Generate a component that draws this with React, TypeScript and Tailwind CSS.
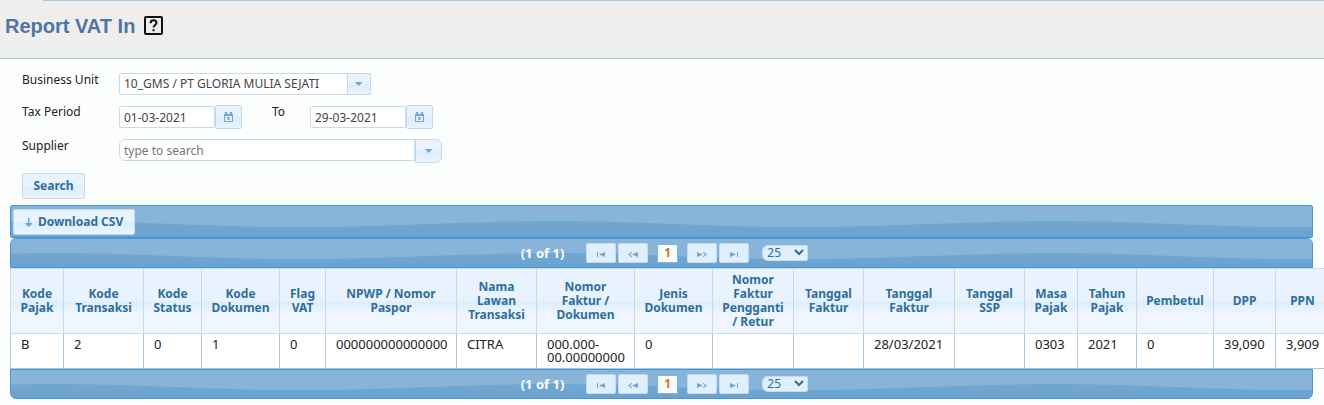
import { useId, useState, type ReactNode } from "react";
import { clsx } from "clsx";

type Column = {
  label: string;
  width: string;
  value: string;
};

const columns: Column[] = [
  { label: "Kode Pajak", width: "w-[53px]", value: "B" },
  { label: "Kode Transaksi", width: "w-[80px]", value: "2" },
  { label: "Kode Status", width: "w-[58px]", value: "0" },
  { label: "Kode Dokumen", width: "w-[78px]", value: "1" },
  { label: "Flag VAT", width: "w-[46px]", value: "0" },
  { label: "NPWP / Nomor Paspor", width: "w-[131px]", value: "000000000000000" },
  { label: "Nama Lawan Transaksi", width: "w-[80px]", value: "CITRA" },
  { label: "Nomor Faktur / Dokumen", width: "w-[98px]", value: "000.000-00.00000000" },
  { label: "Jenis Dokumen", width: "w-[78px]", value: "0" },
  { label: "Nomor Faktur Pengganti / Retur", width: "w-[81px]", value: "" },
  { label: "Tanggal Faktur", width: "w-[70px]", value: "" },
  { label: "Tanggal Faktur", width: "w-[91px]", value: "28/03/2021" },
  { label: "Tanggal SSP", width: "w-[70px]", value: "" },
  { label: "Masa Pajak", width: "w-[53px]", value: "0303" },
  { label: "Tahun Pajak", width: "w-[59px]", value: "2021" },
  { label: "Pembetul", width: "w-[77px]", value: "0" },
  { label: "DPP", width: "w-[62px]", value: "39,090" },
  { label: "PPN", width: "w-[54px]", value: "3,909" },
];

const glass = "border border-[#c5dbec] bg-linear-to-b from-[#e9f3fd] from-50% via-[#dcedfb] via-50% to-[#eaf4fd]";
const field = "border border-[#c5dbec] bg-white px-1 text-xs text-[#444] outline-none";

// glossy wave that repeats every 500px along a bar
function Wave({ crest }: { crest: number }) {
  const id = useId();
  const trough = crest + 6;
  return (
    <svg className="absolute inset-0 h-full w-full" aria-hidden="true">
      <defs>
        <pattern id={id} width="500" height="32" patternUnits="userSpaceOnUse">
          <path
            d={`M-215 0H545V${crest}C450 ${crest} 380 ${trough} 285 ${trough}C190 ${trough} 140 ${crest} 45 ${crest}C-50 ${crest} -120 ${trough} -215 ${trough}Z`}
            fill="#88b4d9"
          />
        </pattern>
      </defs>
      <rect width="100%" height="32" fill={`url(#${id})`} />
    </svg>
  );
}

function Bar({ className, crest, children }: { className: string; crest: number; children: ReactNode }) {
  return (
    <div
      className={clsx(
        "relative mr-[11px] overflow-hidden border border-[#4297d7] bg-linear-to-b from-[#74acd7] to-[#6ca2ce]",
        className
      )}
    >
      <Wave crest={crest} />
      {children}
    </div>
  );
}

function Caret() {
  return (
    <svg viewBox="0 0 8 4" className="h-1 w-2" aria-hidden="true">
      <path d="M0 0H7.5L3.75 4Z" fill="#6da8d5" />
    </svg>
  );
}

function CalendarIcon() {
  return (
    <svg viewBox="0 0 9 10" className="h-[10px] w-[9px]" aria-hidden="true">
      <path
        d="M0 2H1V0H3V2H6V0H8V2H9V10H0ZM1 4V9H8V4Z"
        fill="#6da8d5"
        fillRule="evenodd"
      />
      <path d="M3 5H5.5V8H3.5V6H3Z" fill="#6da8d5" />
    </svg>
  );
}

function DateField({ id, label, value }: { id: string; label: string; value: string }) {
  return (
    <div className="flex items-center">
      <input id={id} aria-label={label} defaultValue={value} className={clsx(field, "h-[22px] w-24 rounded-xs")} />
      <button
        type="button"
        aria-label={`Pick ${label}`}
        className={clsx(glass, "flex h-6 w-[27px] items-center justify-center rounded-xs")}
      >
        <CalendarIcon />
      </button>
    </div>
  );
}

const pagerIcons = {
  First: "M1 1H2V6H1ZM9 1V6L3 3.5Z",
  Previous: "M10 1V6L4 3.5ZM4 0.6L0 3.5L4 6.4V5.2L1.8 3.5L4 1.8Z",
  Next: "M0 1V6L6 3.5ZM6 0.6L10 3.5L6 6.4V5.2L8.2 3.5L6 1.8Z",
  Last: "M1 1V6L7 3.5ZM8 1H9V6H8Z",
};

function PagerButton({ name }: { name: keyof typeof pagerIcons }) {
  return (
    <button
      type="button"
      aria-label={`${name} page`}
      className="flex h-5 w-[30px] items-center justify-center rounded-xs border border-[#c5dbec] bg-[#dfeffc] pt-0.5"
    >
      <svg viewBox="0 0 10 7" className="h-[7px] w-[10px]" aria-hidden="true">
        <path d={pagerIcons[name]} fill="#6da8d5" />
      </svg>
    </button>
  );
}

function Paginator({ className }: { className: string }) {
  const [size, setSize] = useState("25");
  return (
    <Bar className={className} crest={14}>
      <div className="relative flex h-7 items-center justify-center pl-1.5">
        <span className="mr-[22px] text-[13px] font-bold text-white">(1 of 1)</span>
        <div className="flex gap-0.5">
          <PagerButton name="First" />
          <PagerButton name="Previous" />
        </div>
        <button
          type="button"
          aria-label="Page 1"
          aria-current="page"
          className="mx-[9px] h-[19px] w-[21px] border border-[#79b7e7] bg-[#f8fbfd] text-xs leading-4 font-bold text-[#e17009]"
        >
          1
        </button>
        <div className="flex gap-0.5">
          <PagerButton name="Next" />
          <PagerButton name="Last" />
        </div>
        <div className="relative ml-[13px]">
          <select
            aria-label="Rows per page"
            value={size}
            onChange={(e) => setSize(e.target.value)}
            className="block h-4 w-[46px] appearance-none rounded-l-md rounded-r-xs border border-[#c5dbec] bg-[#dfeffc] px-1 text-xs leading-3 text-[#2e6e9e]"
          >
            <option>25</option>
            <option>50</option>
            <option>100</option>
          </select>
          <svg viewBox="0 0 10 7" className="pointer-events-none absolute top-1 right-1 h-[7px] w-[10px]" aria-hidden="true">
            <path d="M1 1L5 5L9 1" fill="none" stroke="#2e6e9e" strokeWidth="2" />
          </svg>
        </div>
      </div>
    </Bar>
  );
}

export default function App() {
  return (
    <div className="min-h-screen overflow-hidden bg-[#fcfdfd] font-['Noto_Sans',sans-serif] text-xs leading-[14px] text-[#222]">
      <header className="border-b border-[#a6c9e2] bg-[#eee]">
        <div className="ml-[43px] h-px bg-[#a6c9e2]" />
        <div className="flex h-[57px] items-center gap-[9px] pb-2 pl-[5px]">
          <h1 className="font-['Liberation_Sans',Arial,sans-serif] text-xl font-bold text-[#4f76a3]">Report VAT In</h1>
          <button type="button" aria-label="Help">
            <svg viewBox="0 0 19 19" className="h-[19px] w-[19px]" fill="none" stroke="#111" strokeWidth="2" aria-hidden="true">
              <rect x="1" y="1" width="17" height="17" rx="1" />
              <path d="M6.5 7.2C6.5 3.2 12.5 3.4 12.5 6.8C12.5 9 9.5 9 9.5 11.6" />
              <path d="M9.5 13.2V15.2" />
            </svg>
          </button>
        </div>
      </header>

      <form className="px-[22px] pt-3.5 pb-1.5" onSubmit={(e) => e.preventDefault()}>
        <div className="mb-2.5 grid grid-cols-[97px_1fr] gap-y-2.5">
          <label htmlFor="unit">Business Unit</label>
          <div className="relative w-[252px]">
            <select id="unit" className={clsx(field, "block h-[22px] w-full appearance-none rounded-xs pr-6")}>
              <option>10_GMS / PT GLORIA MULIA SEJATI</option>
            </select>
            <span
              className={clsx(
                glass,
                "pointer-events-none absolute inset-y-0 right-0 flex w-6 items-center justify-center rounded-r-xs"
              )}
            >
              <Caret />
            </span>
          </div>

          <label htmlFor="from">Tax Period</label>
          <div className="flex">
            <DateField id="from" label="Tax Period" value="01-03-2021" />
            <label htmlFor="to" className="ml-[30px] w-[38px]">
              To
            </label>
            <DateField id="to" label="To" value="29-03-2021" />
          </div>

          <label htmlFor="supplier">Supplier</label>
          <div className="flex items-start">
            <input
              id="supplier"
              placeholder="type to search"
              className={clsx(field, "h-[22px] w-[296px] rounded-l-md placeholder:text-[#757575]")}
            />
            <button
              type="button"
              aria-label="Show suppliers"
              className={clsx(glass, "flex h-6 w-[27px] items-center justify-center rounded-r-md")}
            >
              <Caret />
            </button>
          </div>
        </div>
        <button type="submit" className={clsx(glass, "h-[26px] w-[63px] rounded-xs text-xs font-bold text-[#2e6e9e]")}>
          Search
        </button>
      </form>

      <main className="pl-[10px]">
        <Bar className="rounded-xs" crest={15}>
          <div className="relative px-0.5 pt-[3px] pb-0.5">
            <button
              type="button"
              className={clsx(
                glass,
                "flex h-[26px] w-[122px] items-center gap-1.5 rounded-xs pl-[11px] text-xs font-bold whitespace-nowrap text-[#2e6e9e]"
              )}
            >
              <svg viewBox="0 0 7 9" className="h-[9px] w-[7px]" aria-hidden="true">
                <path d="M3 0H4.5V5H7V6L3.75 9L0.5 6V5H3Z" fill="#6da8d5" />
              </svg>
              Download CSV
            </button>
          </div>
        </Bar>
        <Paginator className="rounded-t-md" />
        <table className="w-[1319px] table-fixed border-collapse">
          <thead>
            <tr>
              {columns.map((col, i) => (
                <th
                  key={i}
                  scope="col"
                  className={clsx(
                    col.width,
                    "border border-[#c5dbec] bg-linear-to-b from-[#e9f3fd] from-50% via-[#dcedfb] via-50% to-[#eff6ff] to-70% px-2 py-1 text-xs leading-[14px] font-bold text-[#2e6e9e]"
                  )}
                >
                  {col.label}
                </th>
              ))}
            </tr>
          </thead>
          <tbody>
            <tr>
              {columns.map((col, i) => (
                <td key={i} className="border border-[#a6c9e2] bg-white py-1 pl-2.5 align-top text-[13px] leading-[13px]">
                  {col.value}
                </td>
              ))}
            </tr>
          </tbody>
        </table>
        <Paginator className="rounded-b-md" />
      </main>
    </div>
  );
}
